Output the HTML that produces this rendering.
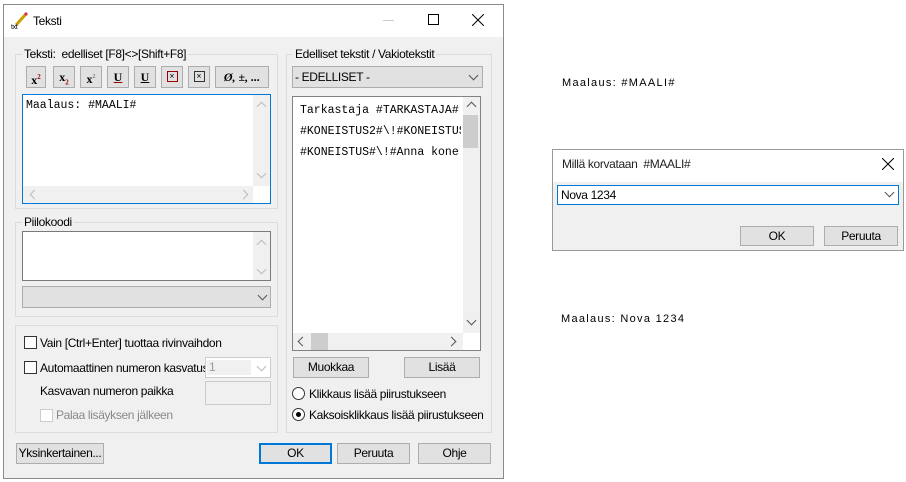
<!DOCTYPE html>
<html><head><meta charset="utf-8"><style>
*{box-sizing:border-box;margin:0;padding:0}
body{width:906px;height:482px;background:#fff;font-family:"Liberation Sans",sans-serif;font-size:12px;letter-spacing:-0.35px;color:#000;position:relative;overflow:hidden}
.a{position:absolute;white-space:nowrap}
.grp{position:absolute;border:1px solid #dcdcdc}
.gl{position:absolute;top:-8px;left:6px;background:#f0f0f0;padding:0 2px;font-size:12px}
.btn{position:absolute;background:#e1e1e1;border:1px solid #adadad;text-align:center;font-size:12px;line-height:18px}
.tb{position:absolute;top:66px;height:22px;background:#e1e1e1;border:1px solid #adadad;font-family:"Liberation Serif",serif;font-weight:bold;font-size:12px;text-align:center;line-height:20px;letter-spacing:0}
.mono{font-family:"Liberation Mono",monospace;font-size:11.5px;letter-spacing:0}
.cb{position:absolute;width:13px;height:13px;border:1px solid #333;background:#fff}
.chev{position:absolute;width:7px;height:7px;border-right:1px solid #555;border-bottom:1px solid #555;transform:rotate(45deg)}
</style></head><body>
<div class="a" style="left:3px;top:4px;width:501px;height:475px;border:1px solid #8a8a8a;background:#f0f0f0"></div>
<div class="a" style="left:4px;top:5px;width:499px;height:32px;background:#fff"></div>
<svg class="a" style="left:10px;top:12px" width="20" height="18"><line x1="6" y1="13" x2="16" y2="2" stroke="#c8a000" stroke-width="3"/><line x1="15" y1="3" x2="17" y2="1" stroke="#e03050" stroke-width="3"/><text x="1" y="17" font-size="7" font-family="Liberation Sans">txt</text></svg>
<div class="a" style="left:33px;top:14px;font-size:12px">Teksti</div>
<div class="a" style="left:383px;top:20px;width:11px;height:1px;background:#ccc"></div>
<div class="a" style="left:428px;top:14px;width:11px;height:11px;border:1px solid #000"></div>
<svg class="a" style="left:472px;top:14px" width="12" height="12"><path d="M0 0L12 12M12 0L0 12" stroke="#000" stroke-width="1"/></svg>

<div class="grp" style="left:15px;top:54px;width:263px;height:155px"><span class="gl">Teksti:&nbsp; edelliset [F8]&lt;&gt;[Shift+F8]</span></div>
<div class="tb" style="left:26px;width:20px">x<sup style="font-size:7px;color:#900">2</sup></div>
<div class="tb" style="left:53px;width:22px">x<sub style="font-size:7px;color:#900">2</sub></div>
<div class="tb" style="left:80px;width:22px">x<sup style="font-size:6px;color:#888">2</sup></div>
<div class="tb" style="left:107px;width:22px;text-decoration:underline;text-decoration-color:#900">U</div>
<div class="tb" style="left:134px;width:22px;text-decoration:underline">U</div>
<div class="tb" style="left:161px;width:22px"><span style="display:inline-block;width:11px;height:11px;border:1px solid #900;font-size:9px;line-height:9px;margin-top:4px;vertical-align:top">×</span></div>
<div class="tb" style="left:188px;width:22px"><span style="display:inline-block;width:11px;height:11px;border:1px solid #333;font-size:9px;line-height:9px;margin-top:4px;vertical-align:top">×</span></div>
<div class="tb" style="left:215px;width:54px;font-style:italic">Ø, ±, ...</div>
<div class="a" style="left:22px;top:94px;width:249px;height:110px;border:1px solid #0078d7;background:#fff"></div>
<div class="a mono" style="left:26px;top:99px">Maalaus: #MAALI#</div>
<div class="a" style="left:253px;top:95px;width:17px;height:91px;background:#f0f0f0"></div>
<div class="a" style="left:23px;top:186px;width:230px;height:17px;background:#f0f0f0"></div>
<div class="chev" style="left:258px;top:103px;transform:rotate(225deg);border-color:#bbb"></div>
<div class="chev" style="left:258px;top:170px;border-color:#bbb"></div>
<div class="chev" style="left:31px;top:191px;transform:rotate(135deg);border-color:#bbb"></div>
<div class="chev" style="left:240px;top:191px;transform:rotate(-45deg);border-color:#bbb"></div>

<div class="grp" style="left:15px;top:222px;width:263px;height:95px"><span class="gl">Piilokoodi</span></div>
<div class="a" style="left:22px;top:231px;width:249px;height:50px;border:1px solid #7a7a7a;background:#fff"></div>
<div class="a" style="left:253px;top:232px;width:17px;height:48px;background:#f0f0f0"></div>
<div class="chev" style="left:258px;top:241px;transform:rotate(225deg);border-color:#bbb"></div>
<div class="chev" style="left:258px;top:266px;border-color:#bbb"></div>
<div class="a" style="left:22px;top:286px;width:249px;height:22px;border:1px solid #adadad;background:#e1e1e1"></div>
<div class="chev" style="left:259px;top:292px"></div>

<div class="grp" style="left:15px;top:325px;width:263px;height:108px"></div>
<div class="cb" style="left:24px;top:336px"></div>
<div class="a" style="left:40px;top:336px">Vain [Ctrl+Enter] tuottaa rivinvaihdon</div>
<div class="cb" style="left:24px;top:361px"></div>
<div class="a" style="left:40px;top:361px">Automaattinen numeron kasvatus</div>
<div class="a" style="left:205px;top:357px;width:66px;height:21px;border:1px solid #ccc;background:#fff"></div>
<div class="a" style="left:207px;top:360px;width:44px;height:15px;background:#f0f0f0;color:#999;padding-left:2px">1</div>
<div class="chev" style="left:258px;top:363px;border-color:#bbb"></div>
<div class="a" style="left:40px;top:384px">Kasvavan numeron paikka</div>
<div class="a" style="left:205px;top:381px;width:66px;height:24px;border:1px solid #ccc;background:#f0f0f0"></div>
<div class="cb" style="left:40px;top:409px;border-color:#ccc"></div>
<div class="a" style="left:56px;top:408px;color:#888">Palaa lisäyksen jälkeen</div>

<div class="grp" style="left:286px;top:54px;width:206px;height:379px"><span class="gl">Edelliset tekstit / Vakiotekstit</span></div>
<div class="a" style="left:292px;top:66px;width:191px;height:22px;border:1px solid #adadad;background:#e1e1e1;padding:3px 0 0 2px">- EDELLISET -</div>
<div class="chev" style="left:470px;top:72px"></div>
<div class="a" style="left:292px;top:96px;width:189px;height:255px;border:1px solid #828282;background:#fff"></div>
<div class="a mono" style="left:300px;top:100px;line-height:21px;width:161px;overflow:hidden">Tarkastaja #TARKASTAJA#<br>#KONEISTUS2#\!#KONEISTUS<br>#KONEISTUS#\!#Anna kone</div>
<div class="a" style="left:463px;top:97px;width:17px;height:236px;background:#f0f0f0"></div>
<div class="a" style="left:463px;top:115px;width:15px;height:33px;background:#cdcdcd"></div>
<div class="a" style="left:293px;top:333px;width:170px;height:17px;background:#f0f0f0"></div>
<div class="a" style="left:311px;top:333px;width:17px;height:17px;background:#cdcdcd"></div>
<div class="chev" style="left:468px;top:103px;transform:rotate(225deg)"></div>
<div class="chev" style="left:468px;top:317px"></div>
<div class="chev" style="left:299px;top:338px;transform:rotate(135deg)"></div>
<div class="chev" style="left:448px;top:338px;transform:rotate(-45deg)"></div>
<div class="btn" style="left:293px;top:357px;width:76px;height:21px">Muokkaa</div>
<div class="btn" style="left:404px;top:357px;width:76px;height:21px">Lisää</div>
<div class="a" style="left:292px;top:387px;width:13px;height:13px;border:1px solid #333;border-radius:50%;background:#fff"></div>
<div class="a" style="left:309px;top:387px">Klikkaus lisää piirustukseen</div>
<div class="a" style="left:292px;top:408px;width:13px;height:13px;border:1px solid #333;border-radius:50%;background:#fff"></div>
<div class="a" style="left:296px;top:412px;width:5px;height:5px;border-radius:50%;background:#000"></div>
<div class="a" style="left:309px;top:408px">Kaksoisklikkaus lisää piirustukseen</div>

<div class="btn" style="left:16px;top:443px;width:88px;height:21px">Yksinkertainen...</div>
<div class="btn" style="left:259px;top:443px;width:73px;height:21px;border:2px solid #0078d7;line-height:17px">OK</div>
<div class="btn" style="left:337px;top:443px;width:73px;height:21px">Peruuta</div>
<div class="btn" style="left:418px;top:443px;width:73px;height:21px">Ohje</div>

<div class="a" style="left:562px;top:77px;font-size:11px;letter-spacing:1.3px">Maalaus: #MAALI#</div>
<div class="a" style="left:552px;top:149px;width:352px;height:102px;border:1px solid #999;background:#f0f0f0"></div>
<div class="a" style="left:553px;top:150px;width:350px;height:32px;background:#fff"></div>
<div class="a" style="left:562px;top:157px;color:#222">Millä korvataan&nbsp; #MAALI#</div>
<svg class="a" style="left:882px;top:158px" width="12" height="12"><path d="M0 0L12 12M12 0L0 12" stroke="#000"/></svg>
<div class="a" style="left:557px;top:185px;width:342px;height:20px;border:1px solid #0078d7;background:#fff;padding:2px 0 0 3px">Nova 1234</div>
<div class="chev" style="left:886px;top:189px"></div>
<div class="btn" style="left:740px;top:226px;width:74px;height:20px">OK</div>
<div class="btn" style="left:824px;top:226px;width:74px;height:20px">Peruuta</div>
<div class="a" style="left:561px;top:313px;font-size:11px;letter-spacing:1.3px">Maalaus: Nova 1234</div>
</body></html>
